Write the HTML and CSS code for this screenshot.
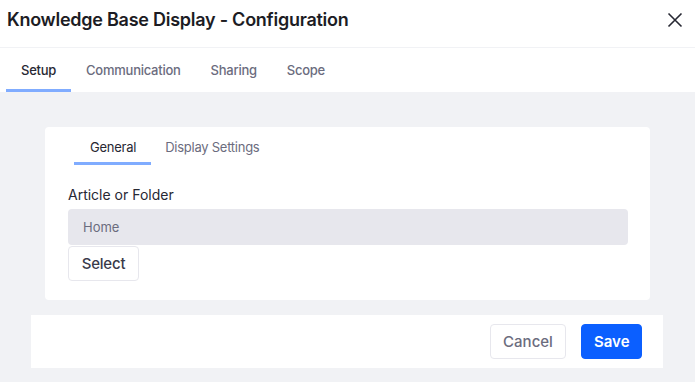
FILE: index.html
```html
<!DOCTYPE html>
<html lang="en">
<head>
    <meta charset="UTF-8">
    <meta name="viewport" content="width=device-width, initial-scale=1.0">
    <title>Knowledge Base Display - Configuration</title>
    <link rel="stylesheet" href="styles.css">
</head>
<body>

    <div class="modal-header">
        <h1 class="modal-title">Knowledge Base Display - Configuration</h1>
        <button class="close-button" aria-label="Close">
            <svg width="16" height="16" viewBox="0 0 16 16">
                <path d="M1.5 1.5 L14.5 14.5 M14.5 1.5 L1.5 14.5" stroke="#272833" stroke-width="1.6" fill="none"/>
            </svg>
        </button>
    </div>

    <div class="nav-tabs">
        <a class="tab active">Setup</a>
        <a class="tab">Communication</a>
        <a class="tab">Sharing</a>
        <a class="tab">Scope</a>
    </div>

    <div class="modal-body">
        <div class="card">
            <div class="card-tabs">
                <a class="card-tab active">General</a>
                <a class="card-tab">Display Settings</a>
            </div>
            <label class="field-label">Article or Folder</label>
            <div class="field-input">Home</div>
            <button class="btn btn-secondary btn-select">Select</button>
        </div>

        <div class="modal-footer">
            <button class="btn btn-secondary btn-cancel">Cancel</button>
            <button class="btn btn-primary">Save</button>
        </div>
    </div>

</body>
</html>
```

FILE: styles.css
```css
* {
    margin: 0;
    padding: 0;
    box-sizing: border-box;
}

body {
    font-family: Inter, "Liberation Sans", sans-serif;
    background-color: #f1f2f5;
    color: #272833;
    width: 695px;
    height: 382px;
    overflow: hidden;
}

.modal-header {
    height: 48px;
    background-color: #fff;
    border-bottom: 1px solid #f1f2f5;
    display: flex;
    align-items: center;
    justify-content: space-between;
    padding: 0 8px 8px 7px;
}

.modal-title {
    font-size: 18px;
    font-weight: 600;
    color: #1c1c24;
    letter-spacing: -0.25px;
}

.close-button {
    background: none;
    border: none;
    width: 24px;
    height: 24px;
    display: flex;
    align-items: center;
    justify-content: center;
    cursor: pointer;
}

.nav-tabs {
    height: 44px;
    background-color: #fff;
    display: flex;
    padding-left: 6px;
}

.tab {
    display: flex;
    align-items: center;
    padding: 3px 15px 0;
    font-size: 13px;
    font-weight: 500;
    letter-spacing: -0.25px;
    color: #6b6c7e;
    border-bottom: 3px solid transparent;
}

.tab.active {
    color: #272833;
    border-bottom-color: #80acff;
}

.modal-body {
    padding-top: 35px;
}

.card {
    background-color: #fff;
    margin: 0 45px 15px 45px;
    border-radius: 4px;
    padding: 0 22px 19px 23px;
}

.card-tabs {
    display: flex;
    height: 38px;
    margin-left: 6px;
    margin-bottom: 21px;
}

.card-tab {
    display: flex;
    align-items: center;
    padding: 4px 15px 0 16px;
    font-size: 13px;
    letter-spacing: -0.25px;
    color: #6b6c7e;
    border-bottom: 3px solid transparent;
}

.card-tab + .card-tab {
    padding-left: 14px;
}

.card-tab.active {
    color: #272833;
    border-bottom-color: #80acff;
}

.field-label {
    display: block;
    font-size: 14px;
    line-height: 17px;
    margin-bottom: 6px;
}

.field-input {
    height: 36px;
    background-color: #e7e7ed;
    border-radius: 4px;
    display: flex;
    align-items: center;
    padding-left: 15px;
    font-size: 13px;
    color: #6b6c7e;
}

.btn {
    height: 35px;
    border-radius: 4px;
    font-family: inherit;
    font-size: 15px;
    font-weight: 500;
    padding: 0 12px;
    cursor: pointer;
}

.btn-secondary {
    background-color: #fff;
    border: 1px solid #e7e7ed;
    color: #393a4a;
}

.btn-select {
    width: 71px;
    margin-top: 1px;
    letter-spacing: -0.2px;
}

.btn-cancel {
    color: #6b6c7e;
    width: 76px;
}

.btn-primary {
    background-color: #0b5fff;
    border: 1px solid #0b5fff;
    color: #fff;
    font-weight: 600;
    width: 61px;
}

.modal-footer {
    background-color: #fff;
    margin: 0 32px 0 31px;
    height: 53px;
    display: flex;
    align-items: center;
    justify-content: flex-end;
    gap: 15px;
    padding-right: 21px;
}
```
